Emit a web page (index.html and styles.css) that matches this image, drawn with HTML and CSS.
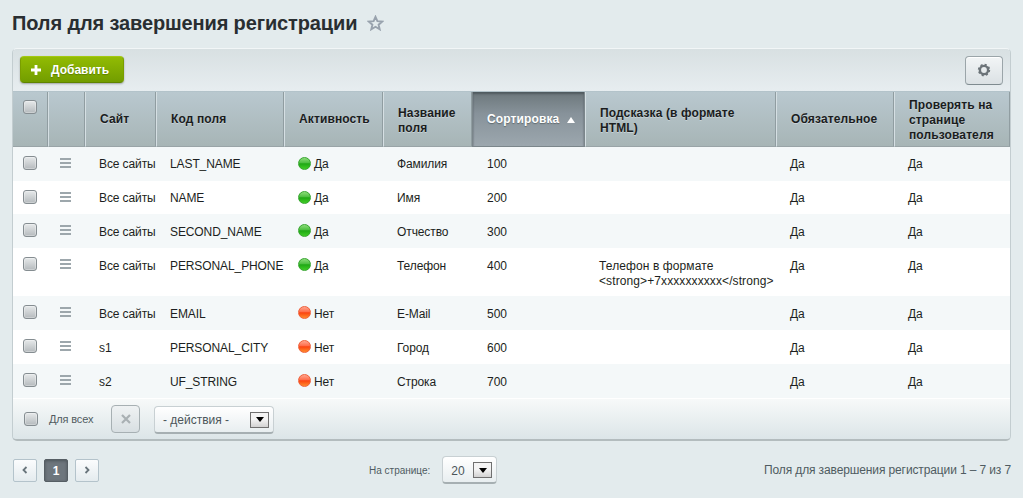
FILE: index.html
```html
<!DOCTYPE html>
<html lang="ru">
<head>
    <meta charset="UTF-8">
    <title>Поля для завершения регистрации</title>
    <link rel="stylesheet" href="styles.css">
</head>
<body>
    <h1 class="page-title">
        <span>Поля для завершения регистрации</span>
        <svg class="star" width="17" height="16" viewBox="0 0 17 16"><path d="M8.5 1.8l1.9 4.3 4.8.5-3.6 3.1 1.1 4.6-4.2-2.5-4.2 2.5 1.1-4.6L1.800 6.600l4.800-.5z" fill="none" stroke="#98a2ad" stroke-width="1.900"/></svg>
    </h1>

    <div class="list">
        <div class="toolbar">
            <button type="button" class="btn-add">
                <svg width="10" height="10" viewBox="0 0 10 10"><path d="M5 0v10M0 5h10" stroke="#fff" stroke-width="2.800"/></svg>
                <span>Добавить</span>
            </button>
            <button type="button" class="btn-settings">
                <svg width="14" height="14" viewBox="0 0 14 14"><circle cx="7" cy="7" r="5.400" fill="none" stroke="#6b7378" stroke-width="1.600" stroke-dasharray="2.120"/><circle cx="7" cy="7" r="4.100" fill="none" stroke="#6b7378" stroke-width="2.400"/></svg>
            </button>
        </div>

        <table class="grid">
            <colgroup>
                <col class="col-check"><col class="col-menu"><col class="col-site"><col class="col-code"><col class="col-active">
                <col class="col-name"><col class="col-sort"><col class="col-hint"><col class="col-required"><col class="col-verify">
            </colgroup>
            <thead>
                <tr>
                    <th class="check"><span class="checkbox"></span></th>
                    <th></th>
                    <th>Сайт</th>
                    <th>Код поля</th>
                    <th>Активность</th>
                    <th class="two-lines">Название поля</th>
                    <th class="sorted">Сортировка<i class="arrow"></i></th>
                    <th class="two-lines">Подсказка (в формате<br>HTML)</th>
                    <th>Обязательное</th>
                    <th class="three-lines">Проверять на странице пользователя</th>
                </tr>
            </thead>
            <tbody>
                <tr>
                    <td class="check"><span class="checkbox"></span></td>
                    <td class="menu"><i class="burger"></i></td>
                    <td>Все сайты</td><td>LAST_NAME</td>
                    <td><i class="lamp green"></i>Да</td>
                    <td>Фамилия</td><td class="sort">100</td><td></td><td>Да</td><td>Да</td>
                </tr>
                <tr class="short">
                    <td class="check"><span class="checkbox"></span></td>
                    <td class="menu"><i class="burger"></i></td>
                    <td>Все сайты</td><td>NAME</td>
                    <td><i class="lamp green"></i>Да</td>
                    <td>Имя</td><td class="sort">200</td><td></td><td>Да</td><td>Да</td>
                </tr>
                <tr class="low">
                    <td class="check"><span class="checkbox"></span></td>
                    <td class="menu"><i class="burger"></i></td>
                    <td>Все сайты</td><td>SECOND_NAME</td>
                    <td><i class="lamp green"></i>Да</td>
                    <td>Отчество</td><td class="sort">300</td><td></td><td>Да</td><td>Да</td>
                </tr>
                <tr class="tall low">
                    <td class="check"><span class="checkbox"></span></td>
                    <td class="menu"><i class="burger"></i></td>
                    <td>Все сайты</td><td>PERSONAL_PHONE</td>
                    <td><i class="lamp green"></i>Да</td>
                    <td>Телефон</td><td class="sort">400</td>
                    <td class="hint">Телефон в формате<br>&lt;strong&gt;+7xxxxxxxxxx&lt;/strong&gt;</td>
                    <td>Да</td><td>Да</td>
                </tr>
                <tr class="low">
                    <td class="check"><span class="checkbox"></span></td>
                    <td class="menu"><i class="burger"></i></td>
                    <td>Все сайты</td><td>EMAIL</td>
                    <td><i class="lamp red"></i>Нет</td>
                    <td>E-Mail</td><td class="sort">500</td><td></td><td>Да</td><td>Да</td>
                </tr>
                <tr class="low">
                    <td class="check"><span class="checkbox"></span></td>
                    <td class="menu"><i class="burger"></i></td>
                    <td>s1</td><td>PERSONAL_CITY</td>
                    <td><i class="lamp red"></i>Нет</td>
                    <td>Город</td><td class="sort">600</td><td></td><td>Да</td><td>Да</td>
                </tr>
                <tr class="low">
                    <td class="check"><span class="checkbox"></span></td>
                    <td class="menu"><i class="burger"></i></td>
                    <td>s2</td><td>UF_STRING</td>
                    <td><i class="lamp red"></i>Нет</td>
                    <td>Строка</td><td class="sort">700</td><td></td><td>Да</td><td>Да</td>
                </tr>
            </tbody>
        </table>

        <div class="actions">
            <span class="checkbox"></span>
            <span class="for-all">Для всех</span>
            <button type="button" class="btn-delete">
                <svg width="10" height="10" viewBox="0 0 10 10"><path d="M1 1l8 8M9 1L1 9" stroke="#a9b0b3" stroke-width="2.200"/></svg>
            </button>
            <div class="select select-action"><span>- действия -</span><i class="drop"></i></div>
        </div>
    </div>

    <div class="pager">
        <div class="pages">
            <a class="page"><svg width="6" height="8" viewBox="0 0 6 8"><path d="M4.500 1L1.500 4l3 3" fill="none" stroke="#68747b" stroke-width="1.800"/></svg></a>
            <span class="page current">1</span>
            <a class="page"><svg width="6" height="8" viewBox="0 0 6 8"><path d="M1.500 1l3 3-3 3" fill="none" stroke="#68747b" stroke-width="1.800"/></svg></a>
        </div>
        <span class="per-page">На странице:</span>
        <div class="select select-count"><span>20</span><i class="drop"></i></div>
        <span class="total">Поля для завершения регистрации 1 – 7 из 7</span>
    </div>
</body>
</html>
```
FILE: styles.css
```css
* {
    box-sizing: border-box;
}

body {
    margin: 0;
    padding: 0 12px;
    background: #e3ebed;
    color: #1c1f21;
    font: 12px/15px "Liberation Sans", Arial, sans-serif;
}

button {
    padding: 0;
    font: inherit;
}

.page-title {
    display: flex;
    align-items: center;
    gap: 10px;
    height: 48px;
    margin: 0;
    padding-bottom: 2px;
    font-size: 20px;
    line-height: 24px;
    letter-spacing: -0.13px;
    color: #292e31;
}

.star {
    display: block;
}

.list {
    width: 999px;
    height: 393px;
    border: 1px solid #c3cdd0;
    border-top-color: #f2f6f7;
    border-bottom: 2px solid #b3bcbe;
    border-radius: 5px;
    overflow: hidden;
}

.toolbar {
    display: flex;
    justify-content: space-between;
    align-items: flex-start;
    height: 43px;
    padding: 7px;
    border-bottom: 1px solid #b3c3ca;
    background: linear-gradient(#d8e0e2, #e7edf0);
}

.btn-add {
    display: flex;
    align-items: center;
    gap: 10px;
    width: 104px;
    height: 27px;
    padding: 1px 0 0 10px;
    border: 1px solid #7a9e00;
    border-top-color: #a3c911;
    border-bottom-color: #5f8500;
    border-radius: 4px;
    background: linear-gradient(#92bb03, #729d00);
    box-shadow: 0 1px 2px rgba(0, 0, 0, 0.3);
    color: #fff;
    font-weight: bold;
    text-shadow: 0 1px 1px #5d8000;
}

.btn-settings {
    display: flex;
    align-items: center;
    justify-content: center;
    width: 38px;
    height: 29px;
    padding-bottom: 2px;
    border: 1px solid #9ba5a9;
    border-bottom-color: #7f8b90;
    border-radius: 4px;
    background: linear-gradient(#f2f5f6, #dbe1e4);
    box-shadow: inset 0 1px 0 #fff;
}

.grid {
    width: 997px;
    table-layout: fixed;
    border-collapse: separate;
    border-spacing: 0;
}

.col-check { width: 35px; }
.col-menu { width: 37px; }
.col-site { width: 71px; }
.col-code { width: 128px; }
.col-active { width: 99px; }
.col-name { width: 89px; }
.col-sort { width: 113px; }
.col-hint { width: 191px; }
.col-required { width: 118px; }
.col-verify { width: 116px; }

.grid th {
    height: 55px;
    padding: 1px 0 0 14px;
    border-left: 1px solid #d5dfe3;
    border-right: 1px solid #909da1;
    border-bottom: 1px solid #99a4a7;
    background: linear-gradient(#b9c8cf, #a7b5b6);
    text-align: left;
    vertical-align: middle;
    letter-spacing: 0.12px;
    color: #1b1d1e;
    text-shadow: 0 1px 0 #c7d2d6;
}

.grid th:first-child {
    border-left: 0;
}

.grid th.two-lines {
    padding-top: 4px;
}

.grid th.three-lines {
    padding-top: 3px;
}

.grid th.sorted {
    border-color: #7b868b;
    background: linear-gradient(#6c777b, #87929a 40%, #9ca7ae);
    box-shadow: inset 0 2px 2px #505a5f;
    color: #fff;
    text-shadow: 0 1px 1px #606b70;
    white-space: nowrap;
}

.arrow {
    display: inline-block;
    margin-left: 8px;
    border: 4px solid transparent;
    border-top: 0;
    border-bottom: 6px solid #fff;
}

.grid td {
    height: 34px;
    padding: 10px 0 0 14px;
    vertical-align: top;
    white-space: nowrap;
    letter-spacing: -0.1px;
}

.grid tr:nth-child(odd) td {
    background: #f4f8f9;
}

.grid tr:nth-child(even) td {
    background: #fff;
}

.grid tr.short td {
    height: 33px;
}

.grid tr.low td {
    padding-top: 11px;
}

.grid tr.tall td {
    height: 48px;
}

.grid td.sort {
    padding-left: 15px;
    letter-spacing: 0;
}

.grid td.hint {
    letter-spacing: 0.1px;
}

.grid th.check {
    padding: 8px 0 0 10px;
    vertical-align: top;
}

.grid tr td.check {
    padding: 9px 0 0 10px;
}

.grid tr td.menu {
    padding: 11px 0 0 12px;
}

.checkbox {
    display: block;
    flex: none;
    width: 14px;
    height: 14px;
    border: 1px solid #858d91;
    border-radius: 3px;
    background: linear-gradient(#e6e9ea, #b5babd);
    box-shadow: inset 0 0 0 1px rgba(255, 255, 255, 0.3);
}

.burger {
    display: block;
    width: 11px;
    height: 10px;
    background: repeating-linear-gradient(#9da7ac 0 2px, transparent 2px 4px);
}

.lamp {
    display: inline-block;
    width: 13px;
    height: 13px;
    margin: 0 3px 0 0;
    border-radius: 50%;
    vertical-align: top;
}

.low .lamp {
    margin-top: -1px;
}

.lamp.green {
    border: 1px solid #36a52e;
    background: linear-gradient(#8bdc79, #4cbe3f 45%, #1fa814 52%, #40cd25);
}

.lamp.red {
    border: 1px solid #ef603a;
    background: linear-gradient(#ffa58e, #ff6c49 45%, #fb4310 52%, #ff8c2c);
}

.actions {
    display: flex;
    align-items: center;
    height: 41px;
    padding: 0 0 1px 11px;
    border-top: 1px solid #fff;
    background: linear-gradient(#f7f9f9, #dce5e8);
    color: #505b61;
}

.for-all {
    width: 62px;
    margin: 2px 0 0 11px;
    font-size: 11px;
    letter-spacing: -0.15px;
}

.btn-delete {
    display: flex;
    align-items: center;
    justify-content: center;
    width: 29px;
    height: 28px;
    border: 1px solid #a7b0b3;
    border-radius: 4px;
    background: linear-gradient(#eff2f3, #d8dfe2);
}

.select {
    display: flex;
    align-items: center;
    justify-content: space-between;
    height: 28px;
    padding: 1px 4px 0 8px;
    border: 1px solid #c8d0d3;
    border-bottom: 2px solid #a6afb2;
    border-radius: 4px;
    background: linear-gradient(#fff, #e8eef0);
    color: #4b5559;
}

.select span {
    padding-top: 2px;
}

.select-action {
    width: 120px;
    margin: 2px 0 0 14px;
}

.select-count {
    width: 55px;
    margin-left: 12px;
}

.drop {
    display: flex;
    align-items: center;
    justify-content: center;
    width: 19px;
    height: 16px;
    border: 1px solid #707070;
    background: linear-gradient(#f4f4f4 45%, #d2d2d2);
}

.drop::before {
    content: "";
    border: 4px solid transparent;
    border-top: 5px solid #000;
    border-bottom: 0;
}

.pager {
    display: flex;
    align-items: center;
    width: 999px;
    height: 28px;
    margin-top: 15px;
    color: #4f5b61;
}

.pages {
    display: flex;
    gap: 7px;
    width: 357px;
    padding-left: 1px;
}

.page {
    display: flex;
    align-items: center;
    justify-content: center;
    width: 24px;
    height: 23px;
    border: 1px solid #b4c3cb;
    border-radius: 2px;
    background: linear-gradient(#fbfcfd, #e4ebee);
}

.page.current {
    padding-top: 2px;
    border-color: #565e64;
    background: #6d767d;
    box-shadow: inset 0 1px 3px #4d555a;
    color: #fff;
    font-weight: bold;
}

.per-page {
    font-size: 10px;
}

.total {
    margin-left: auto;
    letter-spacing: -0.12px;
}
```
